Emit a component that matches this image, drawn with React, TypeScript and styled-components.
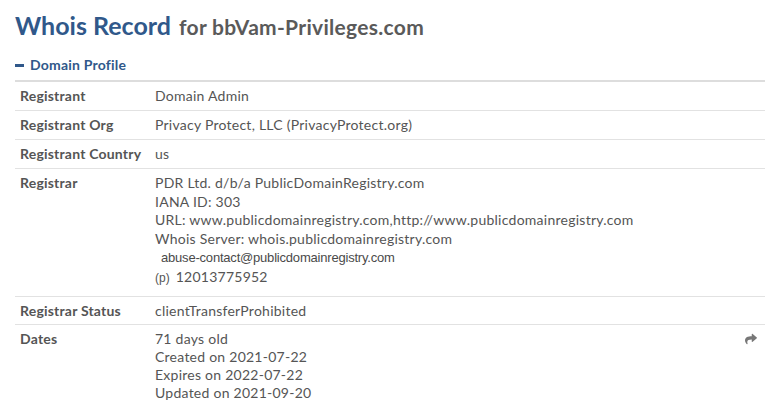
import styled, { createGlobalStyle } from 'styled-components';
import { FaShare } from 'react-icons/fa';

const GlobalStyle = createGlobalStyle`
  body {
    margin: 0;
    background: #fff;
    font-family: Lato, "Open Sans", sans-serif;
    color: #555;
  }
`;

const Page = styled.div`
  width: 750px;
  padding: 9px 0 0 15px;
`;

const Heading = styled.h1`
  margin: 0;
  font-size: 25px;
  font-weight: 700;
  line-height: 32px;
  color: #30588a;
`;

const HeadingSub = styled.span`
  margin-left: 2px;
  font-size: 21px;
  letter-spacing: 0.3px;
  color: #5a5a5a;
`;

const SectionTitle = styled.div`
  display: flex;
  align-items: center;
  gap: 6px;
  margin-top: 13px;
  padding-bottom: 6px;
  border-bottom: 2px solid #ddd;
  font-size: 14px;
  font-weight: 700;
  letter-spacing: 0.2px;
  line-height: 18px;
  color: #30588a;
`;

const Minus = styled.span`
  width: 9px;
  height: 3px;
  margin-top: 1px;
  background: #30588a;
`;

const Table = styled.div`
  display: flex;
  flex-direction: column;
`;

const Row = styled.div<{ $pad?: number }>`
  display: grid;
  grid-template-columns: 135px 1fr 28px;
  padding: 5px 0 ${({ $pad }) => $pad ?? 5}px 5px;
  border-bottom: 1px solid #e2e2e2;
  font-size: 14px;
  line-height: 18px;
  letter-spacing: 0.25px;

  &:last-child {
    border-bottom: none;
  }
`;

const Label = styled.div`
  font-weight: 700;
  letter-spacing: 0.2px;
  color: #555;
`;

const Value = styled.div`
  display: flex;
  flex-direction: column;
  color: #555;
`;

const Line = styled.span`
  line-height: 18.5px;
`;

const Email = styled.span`
  margin-left: 6px;
  font-family: "Liberation Sans", Arial, sans-serif;
  font-size: 13px;
  letter-spacing: -0.2px;
  line-height: 19px;
  color: #4a4a4a;
`;

const Phone = styled.span`
  line-height: 20px;
`;

const PhoneTag = styled.span`
  font-family: "Liberation Sans", Arial, sans-serif;
  font-size: 12px;
  letter-spacing: 0;
  margin-right: 6px;
`;

const Action = styled.div`
  display: flex;
  justify-content: flex-end;
  padding: 3px 8px 0 0;
  color: #777;
`;

const rows: { label: string; lines: string[] }[] = [
  { label: 'Registrant', lines: ['Domain Admin'] },
  { label: 'Registrant Org', lines: ['Privacy Protect, LLC (PrivacyProtect.org)'] },
  { label: 'Registrant Country', lines: ['us'] },
];

export default function App() {
  return (
    <Page>
      <GlobalStyle />
      <Heading>
        Whois Record <HeadingSub>for bbVam-Privileges.com</HeadingSub>
      </Heading>
      <SectionTitle>
        <Minus />
        Domain Profile
      </SectionTitle>
      <Table>
        {rows.map((r) => (
          <Row key={r.label}>
            <Label>{r.label}</Label>
            <Value>
              {r.lines.map((l) => (
                <span key={l}>{l}</span>
              ))}
            </Value>
          </Row>
        ))}
        <Row $pad={8}>
          <Label>Registrar</Label>
          <Value>
            <Line>PDR Ltd. d/b/a PublicDomainRegistry.com</Line>
            <Line>IANA ID: 303</Line>
            <Line>URL: www.publicdomainregistry.com,http://www.publicdomainregistry.com</Line>
            <Line>Whois Server: whois.publicdomainregistry.com</Line>
            <Email>abuse-contact@publicdomainregistry.com</Email>
            <Phone>
              <PhoneTag>(p)</PhoneTag>12013775952
            </Phone>
          </Value>
        </Row>
        <Row $pad={4}>
          <Label>Registrar Status</Label>
          <Value>
            <span>clientTransferProhibited</span>
          </Value>
        </Row>
        <Row>
          <Label>Dates</Label>
          <Value>
            <span>71 days old</span>
            <span>Created on 2021-07-22</span>
            <span>Expires on 2022-07-22</span>
            <span>Updated on 2021-09-20</span>
          </Value>
          <Action>
            <FaShare size={12} />
          </Action>
        </Row>
      </Table>
    </Page>
  );
}
